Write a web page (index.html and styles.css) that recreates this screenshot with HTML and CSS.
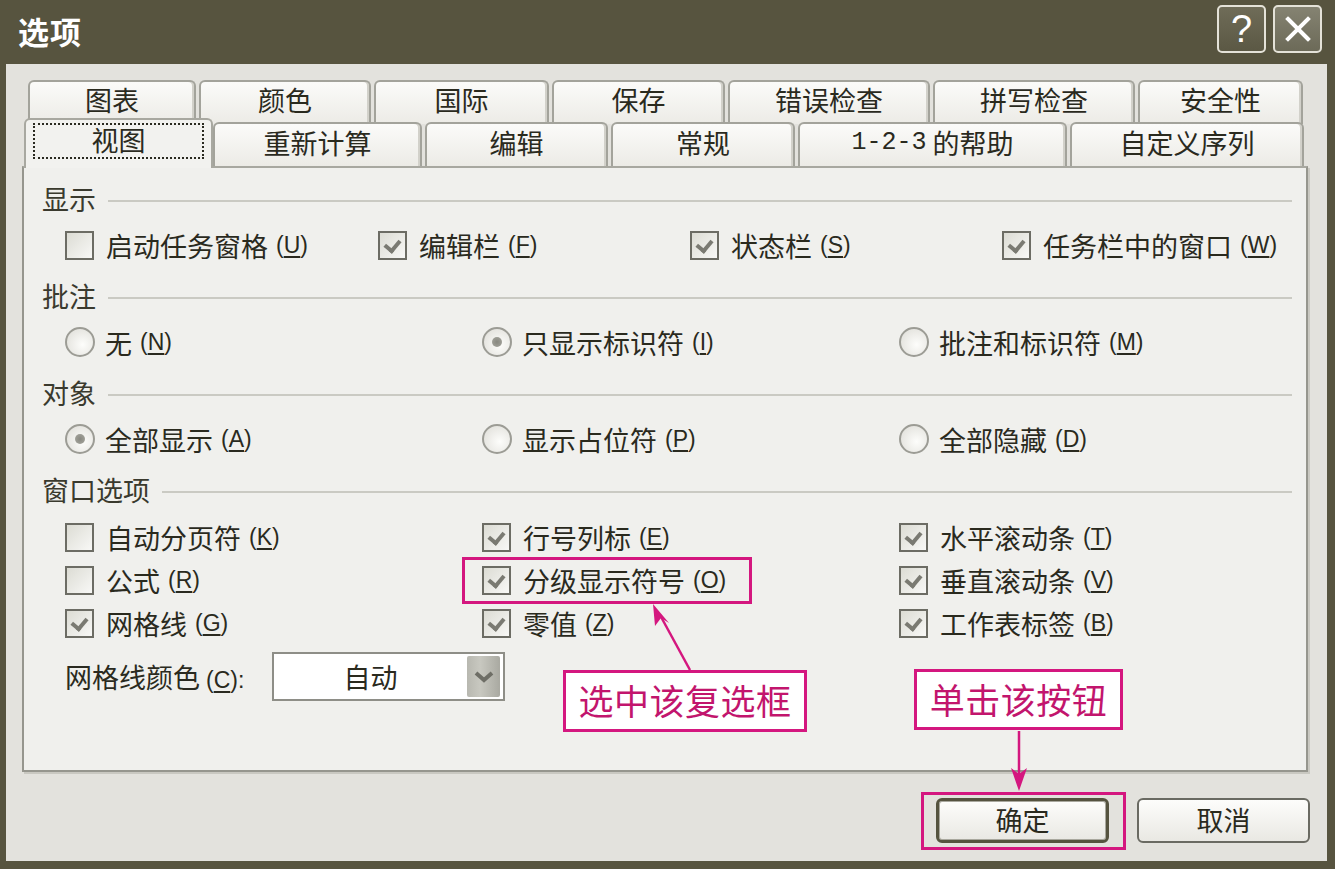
FILE: index.html
```html
<!DOCTYPE html>
<html lang="zh-CN">
<head>
<meta charset="utf-8">
<title>选项</title>
<link rel="stylesheet" href="styles.css">
</head>
<body>
<div class="window">
  <div class="titlebar">
    <span class="title">选项</span>
    <div class="tb-btns">
      <div class="tb-btn help">?</div>
      <div class="tb-btn close">
        <svg width="30" height="30" viewBox="0 0 30 30"><path d="M5 5 L25 25 M25 5 L5 25" stroke="#fff" stroke-width="4" stroke-linecap="square"/></svg>
      </div>
    </div>
  </div>
  <div class="body">
    <div class="tabs row1">
      <div class="tab t1">图表</div>
      <div class="tab t2">颜色</div>
      <div class="tab t3">国际</div>
      <div class="tab t4">保存</div>
      <div class="tab t5">错误检查</div>
      <div class="tab t6">拼写检查</div>
      <div class="tab t7">安全性</div>
    </div>
    <div class="tabs row2">
      <div class="tab sel"><span class="focus">视图</span></div>
      <div class="tab u1">重新计算</div>
      <div class="tab u2">编辑</div>
      <div class="tab u3">常规</div>
      <div class="tab u4"><span class="lat">1-2-3</span>&nbsp;的帮助</div>
      <div class="tab u5">自定义序列</div>
    </div>
    <div class="panel">
      <div class="sec-head first"><span>显示</span><i class="rule"></i></div>
      <div class="opts cols4 single">
        <div class="opt"><span class="cb"></span>启动任务窗格<span class="mn">(<u>U</u>)</span></div>
        <div class="opt"><span class="cb on"></span>编辑栏<span class="mn">(<u>F</u>)</span></div>
        <div class="opt"><span class="cb on"></span>状态栏<span class="mn">(<u>S</u>)</span></div>
        <div class="opt"><span class="cb on"></span>任务栏中的窗口<span class="mn">(<u>W</u>)</span></div>
      </div>
      <div class="sec-head"><span>批注</span><i class="rule"></i></div>
      <div class="opts cols3 single">
        <div class="opt"><span class="rb"></span>无<span class="mn">(<u>N</u>)</span></div>
        <div class="opt"><span class="rb on"></span>只显示标识符<span class="mn">(<u>I</u>)</span></div>
        <div class="opt"><span class="rb"></span>批注和标识符<span class="mn">(<u>M</u>)</span></div>
      </div>
      <div class="sec-head"><span>对象</span><i class="rule"></i></div>
      <div class="opts cols3 single">
        <div class="opt"><span class="rb on"></span>全部显示<span class="mn">(<u>A</u>)</span></div>
        <div class="opt"><span class="rb"></span>显示占位符<span class="mn">(<u>P</u>)</span></div>
        <div class="opt"><span class="rb"></span>全部隐藏<span class="mn">(<u>D</u>)</span></div>
      </div>
      <div class="sec-head"><span>窗口选项</span><i class="rule"></i></div>
      <div class="opts cols3 multi">
        <div class="opt"><span class="cb"></span>自动分页符<span class="mn">(<u>K</u>)</span></div>
        <div class="opt"><span class="cb on"></span>行号列标<span class="mn">(<u>E</u>)</span></div>
        <div class="opt"><span class="cb on"></span>水平滚动条<span class="mn">(<u>T</u>)</span></div>
        <div class="opt"><span class="cb"></span>公式<span class="mn">(<u>R</u>)</span></div>
        <div class="opt"><span class="cb on"></span>分级显示符号<span class="mn">(<u>O</u>)</span></div>
        <div class="opt"><span class="cb on"></span>垂直滚动条<span class="mn">(<u>V</u>)</span></div>
        <div class="opt"><span class="cb on"></span>网格线<span class="mn">(<u>G</u>)</span></div>
        <div class="opt"><span class="cb on"></span>零值<span class="mn">(<u>Z</u>)</span></div>
        <div class="opt"><span class="cb on"></span>工作表标签<span class="mn">(<u>B</u>)</span></div>
      </div>
      <div class="color-row">
        <span class="color-label">网格线颜色<span class="mn">(<u>C</u>):</span></span>
        <div class="combo">
          <span class="combo-val">自动</span>
          <span class="combo-btn">
            <svg width="22" height="16" viewBox="0 0 22 16"><path d="M3 4 L11 11 L19 4" fill="none" stroke="#6e6e66" stroke-width="4"/></svg>
          </span>
        </div>
      </div>
    </div>
    <div class="buttons">
      <div class="btn default">确定</div>
      <div class="btn">取消</div>
    </div>
  </div>

  <div class="mark mark-opt"></div>
  <div class="mark mark-ok"></div>
  <div class="note note1">选中该复选框</div>
  <div class="note note2">单击该按钮</div>
  <svg class="arrows" width="1335" height="869" viewBox="0 0 1335 869">
    <line x1="690" y1="670" x2="660" y2="615" stroke="#d4177f" stroke-width="2.5"/>
    <path d="M653 604 L669 623 L661 618 L655 626 Z" fill="#d4177f"/>
    <line x1="1019" y1="731" x2="1019" y2="778" stroke="#d4177f" stroke-width="2.5"/>
    <path d="M1019 791 L1011 768 L1019 774 L1027 768 Z" fill="#d4177f"/>
  </svg>
</div>
</body>
</html>
```

FILE: styles.css
```css
* { box-sizing: border-box; }
html, body { margin: 0; padding: 0; }
body {
  width: 1335px;
  height: 869px;
  overflow: hidden;
  font-family: "Noto Sans CJK SC", "Liberation Sans", sans-serif;
  color: #2a2a1e;
}
.window {
  position: relative;
  width: 1335px;
  height: 869px;
  background: #57543f;
  display: flex;
  flex-direction: column;
}
.titlebar {
  height: 64px;
  flex: none;
  display: flex;
  align-items: center;
  justify-content: space-between;
  padding: 0 13px 0 18px;
}
.title {
  color: #fff;
  font-size: 31px;
  font-weight: 700;
  letter-spacing: 1px;
  margin-top: -4px;
}
.tb-btns {
  display: flex;
  gap: 7px;
  margin-top: -7px;
}
.tb-btn {
  width: 49px;
  height: 48px;
  border: 2px solid #e4e2d8;
  border-radius: 5px;
  display: flex;
  align-items: center;
  justify-content: center;
  color: #fff;
}
.help {
  background: linear-gradient(#6f6c58, #5b5844);
  font-family: "Liberation Sans", sans-serif;
  font-size: 38px;
  line-height: 1;
}
.close {
  background: linear-gradient(#858372, #6c6a58);
}
.body {
  flex: 1;
  margin: 0 8px 8px 6px;
  background: #e3e2dd;
  padding: 16px 19px 0 16px;
  display: flex;
  flex-direction: column;
}
.tabs {
  display: flex;
  font-size: 27px;
}
.row1 {
  height: 42px;
  padding-left: 6px;
  gap: 3px;
}
.row2 {
  height: 44px;
  padding-left: 2px;
  position: relative;
  z-index: 2;
}
.tab {
  border: 2px solid #a3a39b;
  border-bottom: none;
  border-radius: 6px 6px 0 0;
  background: linear-gradient(#fbfbf9, #ecebe6);
  display: flex;
  align-items: center;
  justify-content: center;
  box-shadow: inset -2px 0 0 #d2d1ca;
  line-height: 1;
}
.row1 .tab { height: 44px; padding-bottom: 8px; }
.t1 { width: 168px; }
.t2 { width: 172px; }
.t3 { width: 175px; }
.t4 { width: 173px; }
.t5 { width: 202px; }
.t6 { width: 202px; }
.t7 { width: 165px; }
.row2 .tab { height: 44px; margin-left: 3px; padding-bottom: 5px; }
.row2 .tab.sel {
  width: 189px;
  height: 50px;
  margin-top: -4px;
  margin-left: 0;
  padding-bottom: 0;
  background: #f2f2ef;
  box-shadow: none;
  border-color: #a8a8a0;
}
.row2 .tab.u1 { margin-left: 0; width: 209px; }
.u2 { width: 183px; }
.u3 { width: 184px; }
.u4 { width: 269px; }
.u5 { width: 234px; }
.lat {
  font-family: "Liberation Mono", monospace;
  font-size: 25px;
}
.focus {
  width: 171px;
  height: 36px;
  border: 2px dotted #2a2a20;
  display: flex;
  align-items: center;
  justify-content: center;
  margin-bottom: 6px;
  padding-bottom: 3px;
}
.panel {
  height: 606px;
  background: #f0f0ed;
  border: 2px solid #96968e;
  border-top-color: #a8a8a0;
  box-shadow: 2px 2px 0 #c9c8c1;
  padding-top: 14px;
  position: relative;
  z-index: 1;
}
.sec-head {
  height: 36px;
  margin-top: 7px;
  display: flex;
  align-items: center;
  padding-left: 18px;
  padding-right: 14px;
  font-size: 27px;
  color: #3a3a2e;
}
.sec-head span { margin-top: -3px; }
.sec-head.first { margin-top: 0; }
.rule {
  flex: 1;
  height: 2px;
  background: #cacac3;
  margin-left: 12px;
  margin-top: 2px;
}
.opts {
  display: grid;
  padding-left: 41px;
  font-size: 27px;
}
.cols4 { grid-template-columns: 313px 312px 312px 1fr; }
.cols3 { grid-template-columns: 417px 417px 1fr; }
.single { height: 54px; align-items: center; }
.multi { margin-top: 7px; grid-auto-rows: 43px; align-items: center; }
.opt {
  display: flex;
  align-items: center;
  white-space: nowrap;
  line-height: 1;
}
.mn {
  font-family: "Liberation Sans", sans-serif;
  font-size: 23px;
  margin-left: 8px;
  color: #2a2a20;
}
.mn u { text-decoration-thickness: 2px; text-underline-offset: 3px; }
.cb {
  width: 29px;
  height: 29px;
  flex: none;
  border: 2px solid #6c6c64;
  background: linear-gradient(135deg, #dcdcd4, #f8f8f6);
  margin-right: 12px;
  position: relative;
}
.cb.on::after {
  content: "";
  position: absolute;
  left: 7px;
  top: 4px;
  width: 7px;
  height: 11px;
  border: solid #7a7a72;
  border-width: 0 4px 4px 0;
  transform: rotate(40deg);
}
.rb {
  width: 30px;
  height: 30px;
  flex: none;
  border-radius: 50%;
  border: 2px solid #9c9c95;
  background: radial-gradient(circle at 60% 60%, #fdfdfb, #dddcd6);
  margin-right: 10px;
  position: relative;
}
.rb.on::after {
  content: "";
  position: absolute;
  left: 8px;
  top: 8px;
  width: 10px;
  height: 10px;
  border-radius: 50%;
  background: radial-gradient(#888880, #a8a8a0);
}
.color-row {
  margin-top: 7px;
  height: 49px;
  display: flex;
  align-items: center;
  padding-left: 41px;
  font-size: 27px;
}
.color-label {
  width: 207px;
  white-space: nowrap;
  color: #2a2a20;
}
.color-label .mn { margin-left: 6px; }
.combo {
  width: 233px;
  height: 49px;
  border: 2px solid #8e8e87;
  background: #fff;
  display: flex;
  align-items: center;
  padding-right: 3px;
}
.combo-val {
  flex: 1;
  text-align: center;
  font-size: 27px;
}
.combo-btn {
  width: 33px;
  height: 41px;
  background: linear-gradient(90deg, #b8b8b0, #c8c8c0 40%, #a9a9a1);
  border-radius: 2px;
  display: flex;
  align-items: center;
  justify-content: center;
}
.buttons {
  display: flex;
  justify-content: flex-end;
  gap: 28px;
  margin-top: 26px;
  margin-right: -2px;
}
.btn {
  width: 173px;
  height: 45px;
  border: 2px solid #6a6a62;
  border-radius: 6px;
  background: linear-gradient(#fdfdfb, #e9e8e3);
  display: flex;
  align-items: center;
  justify-content: center;
  font-size: 27px;
  line-height: 1;
  padding-bottom: 3px;
}
.btn.default {
  border: 3px solid #55533f;
  box-shadow: inset 0 0 0 1px #a9a89e;
}
.mark {
  position: absolute;
  border: 3px solid #d4177f;
  z-index: 5;
}
.mark-opt { left: 462px; top: 557px; width: 290px; height: 47px; }
.mark-ok { left: 921px; top: 792px; width: 205px; height: 58px; }
.note {
  position: absolute;
  z-index: 5;
  background: #fff;
  border: 3px solid #d4177f;
  color: #c2156d;
  font-size: 35px;
  line-height: 1;
  display: flex;
  align-items: center;
  justify-content: center;
  letter-spacing: 0.5px;
  padding-bottom: 3px;
}
.note1 { left: 563px; top: 670px; width: 244px; height: 62px; }
.note2 { left: 914px; top: 669px; width: 209px; height: 61px; }
.arrows {
  position: absolute;
  left: 0;
  top: 0;
  z-index: 6;
  pointer-events: none;
}
```
